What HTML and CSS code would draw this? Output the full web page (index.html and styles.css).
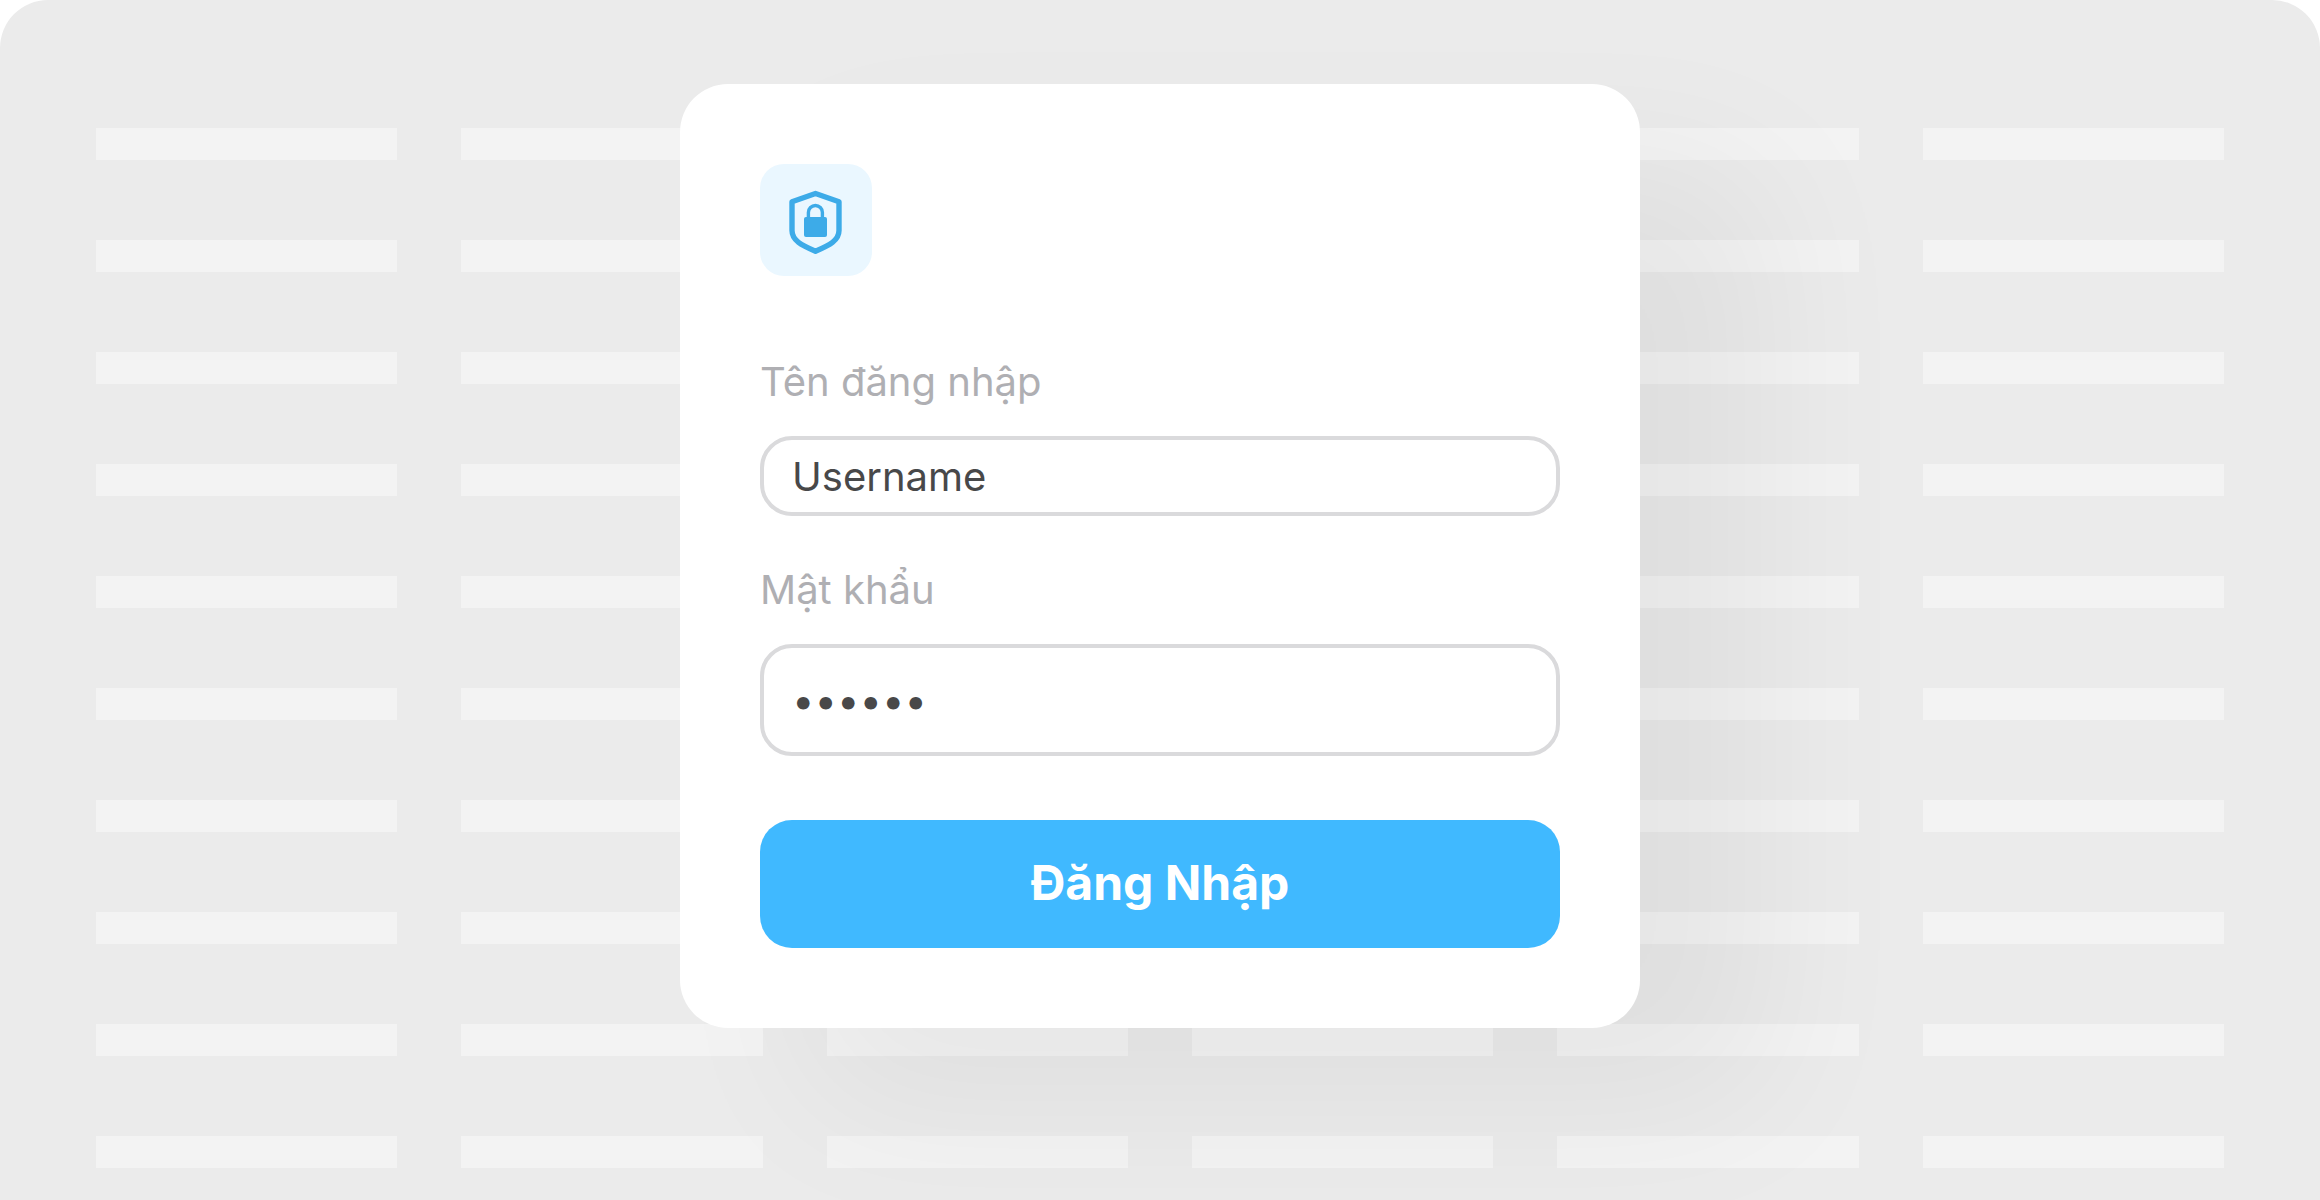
FILE: index.html
```html
<!DOCTYPE html>
<html lang="vi">
<head>
  <meta charset="UTF-8">
  <meta name="viewport" content="width=device-width, initial-scale=1.0">
  <title>Đăng Nhập</title>

  <link rel="stylesheet" href="styles.css">
</head>
<body>
  <div class="page">
    <div class="backdrop" aria-hidden="true">
      <div class="column"></div>
      <div class="column"></div>
      <div class="column"></div>
      <div class="column"></div>
      <div class="column"></div>
      <div class="column"></div>
    </div>

    <form class="card" id="loginForm" method="POST">
      <div class="badge">
        <svg width="112" height="112" viewBox="0 0 112 112" fill="none" aria-hidden="true">
          <path d="M55.500 29.500L79 37.700V66.500C79 76.500 69.500 81 55.500 87.200C41.500 81 32 76.500 32 66.500V37.700Z" stroke="#3dabe8" stroke-width="5.400" stroke-linejoin="round"/>
          <path d="M48.400 55V48.500a7 7 0 0 1 14 0V55" stroke="#3dabe8" stroke-width="3.400"/>
          <rect x="44" y="53" width="23" height="20" rx="2" fill="#3dabe8"/>
        </svg>
      </div>
      <div class="form-group">
        <label for="username">Tên đăng nhập</label>
        <input type="text" id="username" name="username" value="Username" required>
      </div>
      <div class="form-group">
        <label for="password">Mật khẩu</label>
        <input type="password" id="password" name="password" value="123456" required>
      </div>
      <button type="submit">Đăng Nhập</button>
    </form>
  </div>
</body>
</html>
```
FILE: styles.css
```css
* {
  box-sizing: border-box;
}

body {
  margin: 0;
  background-color: #fff;
  font-family: Inter, "Liberation Sans", sans-serif;
}

.page {
  display: grid;
  min-height: 100vh;
  overflow: hidden;
  background-color: #ebebeb;
  border-radius: 48px 48px 0 0;
}

.backdrop,
.card {
  grid-area: 1 / 1;
}

.backdrop {
  display: grid;
  grid-template-columns: repeat(6, 1fr);
  gap: 64px;
  padding: 128px 96px 0;
}

.column {
  background: repeating-linear-gradient(#f3f3f3 0 32px, transparent 32px 112px);
}

.card {
  align-self: start;
  justify-self: center;
  width: 100%;
  max-width: 960px;
  margin: 84px 0;
  padding: 80px;
  background-color: #fff;
  border-radius: 48px;
  box-shadow: 128px 80px 160px rgba(0, 0, 0, 0.05);
}

.badge {
  width: 112px;
  height: 112px;
  margin-bottom: 80px;
  background-color: #eaf7ff;
  border-radius: 24px;
}

.badge svg {
  display: block;
}

.form-group {
  margin-bottom: 48px;
}

.form-group label {
  display: block;
  margin-bottom: 28px;
  color: #afafb3;
  font-size: 40px;
  line-height: 52px;
}

.form-group input {
  display: block;
  width: 100%;
  height: 80px;
  padding: 0 28px;
  color: #484849;
  background-color: #fff;
  border: 4px solid #dadadc;
  border-radius: 32px;
  font-family: inherit;
  font-size: 40px;
}

.form-group input[type="password"] {
  height: 112px;
}

button {
  display: block;
  width: 100%;
  height: 128px;
  margin-top: 64px;
  padding: 0 0 4px;
  color: #fff;
  background-color: #40b9ff;
  border: none;
  border-radius: 32px;
  font-family: inherit;
  font-size: 48px;
  font-weight: 700;
  cursor: pointer;
}

button:hover {
  background-color: #2fadf5;
}
```
